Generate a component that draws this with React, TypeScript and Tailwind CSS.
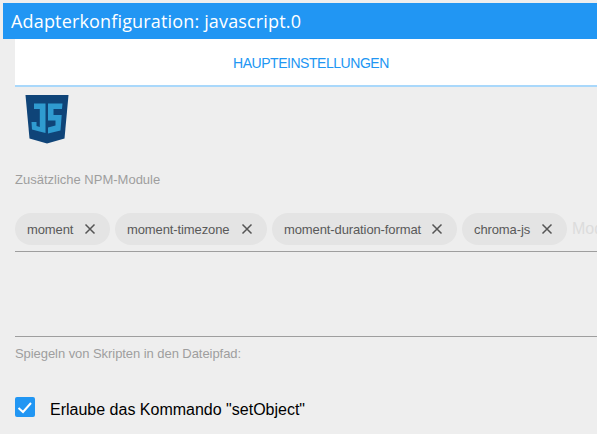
import React from "react";

const modules = [
  { name: "moment", width: "w-[95px]", text: "w-[46px]" },
  { name: "moment-timezone", width: "w-[152px]", text: "w-[103px]" },
  { name: "moment-duration-format", width: "w-[185px]", text: "w-[136px]" },
  { name: "chroma-js", width: "w-[105px]", text: "w-[56px]" },
];

function Logo() {
  return (
    <svg className="block" width="44" height="49" viewBox="0 0 44 49">
      <path d="M.5 0H43.5L39.5 43.500 22 48.500 4.500 43.500Z" fill="#0f4478" />
      <path d="M9 8.500H20.500V38L14.500 36.500 7 34.500 6.500 27H11.500V31L14.800 32V14H9Z" fill="#2f9bd0" />
      <path d="M23 8.500H37.500L37 14H28.500V20H36.700L35.500 35.500 23 38.500V32.500L30.500 30.500V25.500H23Z" fill="#2f9bd0" />
    </svg>
  );
}

function Chip({ name, width, text }: { name: string; width: string; text: string }) {
  return (
    <div className={`flex h-8 shrink-0 items-center rounded-full bg-[#e4e4e4] pl-3 ${width}`}>
      <span className={`whitespace-nowrap pt-0.5 text-[13px] tracking-[-0.11px] text-[#595959] ${text}`}>{name}</span>
      <svg className="ml-[11px]" width="12" height="12" viewBox="0 0 12 12" fill="none" stroke="#555" strokeWidth="1.5">
        <path d="M1.500 1.500 10.500 10.500M10.500 1.500 1.500 10.500" />
      </svg>
    </div>
  );
}

export default function App() {
  return (
    <div className="h-[434px] w-[597px] overflow-hidden bg-[#eee] pl-[3px] pt-[3px] font-['Liberation_Sans',Arial,sans-serif]">
      <header className="flex h-9 items-center whitespace-nowrap bg-[#2196f3] pl-2 pt-px font-['Open_Sans','Noto_Sans',sans-serif] text-[18px] tracking-[0.16px] text-white">
        Adapterkonfiguration: javascript.0
      </header>
      <main className="pl-3">
        <nav className="flex h-12 border-b-2 border-[#a9d8fb] bg-white">
          <span className="ml-[218px] text-[14px] leading-[48px] tracking-[-0.46px] text-[#2196f3]">HAUPTEINSTELLUNGEN</span>
        </nav>
        <div className="flex h-[85px] pl-[10px] pt-2">
          <Logo />
        </div>
        <div className="h-[41px] whitespace-nowrap text-[13px] leading-4 text-[#9e9e9e]">Zusätzliche NPM-Module</div>
        <div className="flex h-[39px] gap-[5px] overflow-hidden border-b border-[#9e9e9e]">
          {modules.map((m) => (
            <Chip key={m.name} {...m} />
          ))}
          <span className="text-[16px] leading-8 text-[#dcdcdc]">Modul</span>
        </div>
        <div className="h-[85px] border-b border-[#9e9e9e]" />
        <div className="h-[60px] whitespace-nowrap pt-[9px] text-[13px] leading-4 tracking-[-0.06px] text-[#9e9e9e]">
          Spiegeln von Skripten in den Dateipfad:
        </div>
        <label className="flex h-5 items-center gap-[15px]">
          <span className="flex size-5 items-center justify-center rounded-[2px] bg-[#2196f3]">
            <svg width="20" height="20" viewBox="0 0 20 20" fill="none" stroke="#fff" strokeWidth="2">
              <path d="M3.500 11 8 15 16 6" />
            </svg>
          </span>
          <span className="whitespace-nowrap pt-[5px] text-[16px] leading-5 text-black">Erlaube das Kommando "setObject"</span>
        </label>
      </main>
    </div>
  );
}
